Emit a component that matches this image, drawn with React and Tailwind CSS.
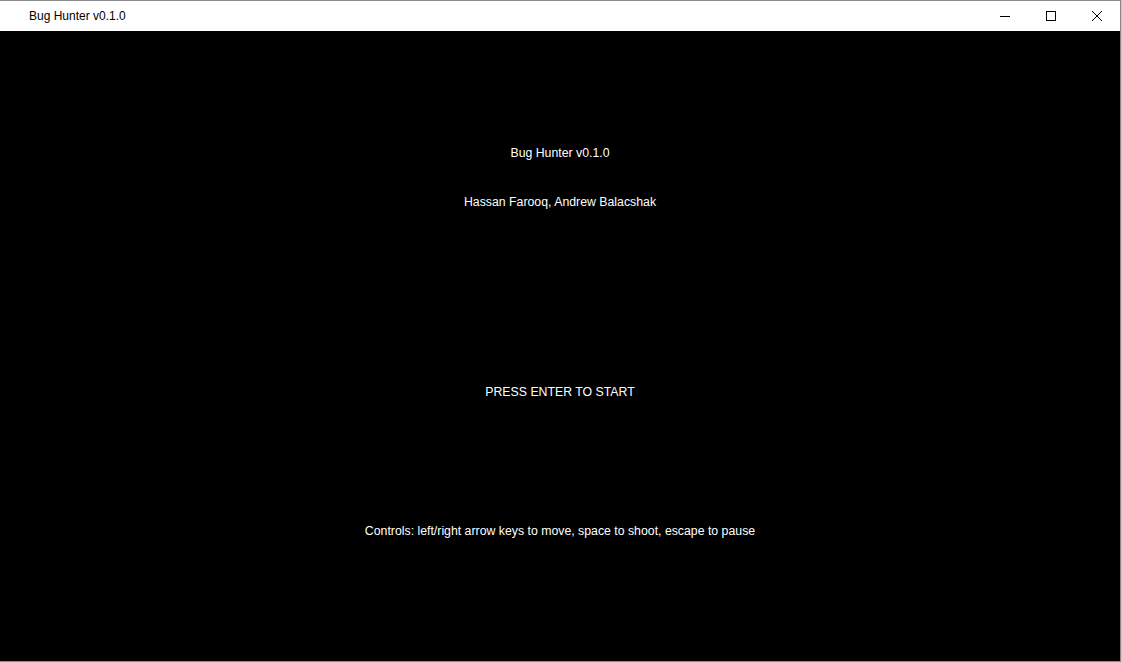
import React from "react";

// game window title bar + start screen
const TitleBar = () => (
  <div className="flex h-[30px] items-center bg-white">
    <span className="ml-[29px] text-[12px] text-black" style={{ fontFamily: '"Liberation Sans", Arial, sans-serif' }}>
      Bug Hunter v0.1.0
    </span>
    <div className="ml-auto flex h-full">
      <div className="flex h-full w-[46px] items-center justify-center">
        <svg width="10" height="10" viewBox="0 0 10 10">
          <path d="M0 5.5h10" stroke="#000" strokeWidth="1" />
        </svg>
      </div>
      <div className="flex h-full w-[46px] items-center justify-center">
        <svg width="10" height="10" viewBox="0 0 10 10">
          <rect x="0.5" y="0.5" width="9" height="9" fill="none" stroke="#000" strokeWidth="1" />
        </svg>
      </div>
      <div className="flex h-full w-[46px] items-center justify-center">
        <svg width="10" height="10" viewBox="0 0 10 10">
          <path d="M0 0L10 10M10 0L0 10" stroke="#000" strokeWidth="1" />
        </svg>
      </div>
    </div>
  </div>
);

const App = () => {
  return (
    <div className="flex h-[662px] w-[1122px] bg-[#c8c8c8]">
      <div className="flex h-[662px] w-[1121px] flex-col border border-t border-[#8a8a8a] border-l-0">
        <TitleBar />
        <div
          className="flex flex-1 flex-col items-center bg-black pt-[114px] text-[12.3px] leading-4 text-white"
          style={{ fontFamily: '"Liberation Sans", Arial, sans-serif' }}
        >
          <p>Bug Hunter v0.1.0</p>
          <p className="mt-[33px]">Hassan Farooq, Andrew Balacshak</p>
          <p className="mt-[174px]">PRESS ENTER TO START</p>
          <p className="mt-[123px]">Controls: left/right arrow keys to move, space to shoot, escape to pause</p>
        </div>
      </div>
    </div>
  );
};

export default App;
